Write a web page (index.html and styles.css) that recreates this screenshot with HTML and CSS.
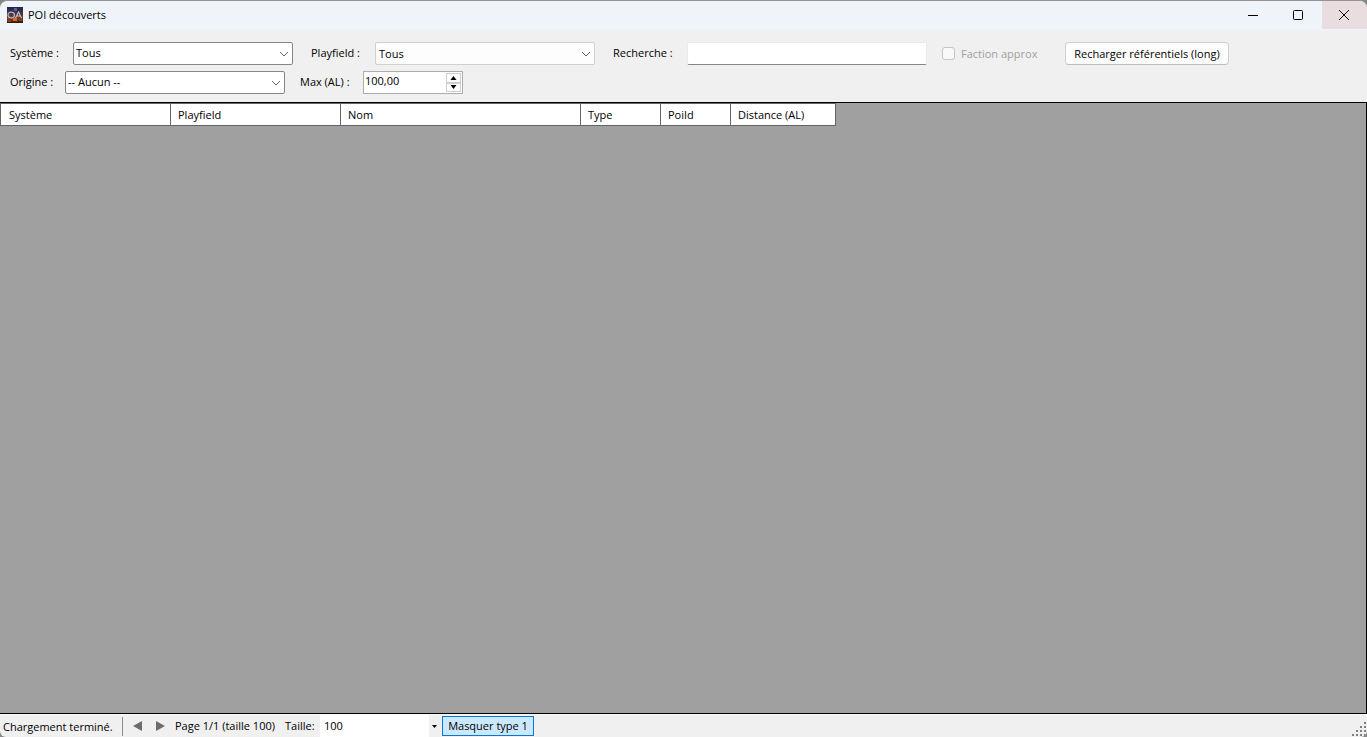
FILE: index.html
```html
<!DOCTYPE html>
<html lang="fr">
<head>
<meta charset="utf-8">
<title>POI découverts</title>
<link rel="stylesheet" href="styles.css">
</head>
<body>
<div class="window">
  <header class="titlebar">
    <svg class="app-icon" width="16" height="16" viewBox="0 0 16 16" aria-hidden="true">
      <defs>
        <linearGradient id="sky" x1="0" y1="0" x2="0" y2="1">
          <stop offset="0" stop-color="#1d2549"/>
          <stop offset=".45" stop-color="#4c3549"/>
          <stop offset=".75" stop-color="#7d3c1b"/>
          <stop offset="1" stop-color="#2c1714"/>
        </linearGradient>
      </defs>
      <rect width="16" height="16" fill="url(#sky)"/>
      <path d="M7 1h3v3H7z" fill="#4b5fae"/>
      <path d="M6 11h4v3H6z" fill="#d0701d"/>
      <path d="M1 13h3v2H1zM12 12h3v2h-3z" fill="#87401a"/>
      <ellipse cx="4.300" cy="8" rx="3.200" ry="2.900" fill="none" stroke="#b9b3bd" stroke-width="1.200"/>
      <path d="M8.500 11l3-6 3 6M9.500 9h4" fill="none" stroke="#c5bfc8" stroke-width="1.200"/>
    </svg>
    <h1 class="title">POI découverts</h1>
    <div class="window-buttons">
      <button class="window-button" type="button" aria-label="Réduire">
        <svg width="12" height="12" viewBox="0 0 12 12"><path d="M1 6.500h10" stroke="#000"/></svg>
      </button>
      <button class="window-button" type="button" aria-label="Agrandir">
        <svg width="12" height="12" viewBox="0 0 12 12"><rect x="1.500" y="1.500" width="9" height="9" rx="1" fill="none" stroke="#000"/></svg>
      </button>
      <button class="window-button close" type="button" aria-label="Fermer">
        <svg width="12" height="12" viewBox="0 0 12 12"><path d="M1 1l10 10M11 1L1 11" stroke="#111"/></svg>
      </button>
    </div>
  </header>

  <form class="filters">
    <div class="filter-row">
      <div class="field">
        <label class="label-system" for="system">Système :</label>
        <span class="combo"><select id="system"><option>Tous</option></select><svg class="chevron" width="10" height="6" viewBox="0 0 10 6"><path d="M1 1l4 4 4-4" fill="none" stroke="#666"/></svg></span>
      </div>
      <div class="field">
        <label class="label-playfield" for="playfield">Playfield :</label>
        <span class="combo flat"><select id="playfield"><option>Tous</option></select><svg class="chevron" width="10" height="6" viewBox="0 0 10 6"><path d="M1 1l4 4 4-4" fill="none" stroke="#666"/></svg></span>
      </div>
      <div class="field">
        <label class="label-search" for="search">Recherche :</label>
        <input class="search" id="search" type="text">
      </div>
      <div class="check">
        <input id="faction" type="checkbox" disabled>
        <label for="faction">Faction approx</label>
      </div>
      <button class="reload" type="button">Recharger référentiels (long)</button>
    </div>
    <div class="filter-row">
      <div class="field">
        <label class="label-origin" for="origin">Origine :</label>
        <span class="combo"><select id="origin"><option>-- Aucun --</option></select><svg class="chevron" width="10" height="6" viewBox="0 0 10 6"><path d="M1 1l4 4 4-4" fill="none" stroke="#666"/></svg></span>
      </div>
      <div class="field second">
        <label class="label-max" for="max">Max (AL) :</label>
        <span class="spinner">
          <input id="max" type="text" value="100,00">
          <span class="steps">
            <button type="button" aria-label="Augmenter"><svg width="7" height="4" viewBox="0 0 7 4"><path d="M0.500 4L3.500 0l3 4z"/></svg></button>
            <button type="button" aria-label="Diminuer"><svg width="7" height="4" viewBox="0 0 7 4"><path d="M0.500 0h6l-3 4z"/></svg></button>
          </span>
        </span>
      </div>
    </div>
  </form>

  <main class="grid-area">
    <table class="poi-table">
      <colgroup>
        <col class="col-place"><col class="col-place"><col class="col-name"><col class="col-type"><col class="col-id"><col class="col-distance">
      </colgroup>
      <thead>
        <tr><th>Système</th><th>Playfield</th><th>Nom</th><th>Type</th><th>PoiId</th><th>Distance (AL)</th></tr>
      </thead>
    </table>
  </main>

  <footer class="statusbar">
    <span class="status">Chargement terminé.</span>
    <button class="page-button" type="button" aria-label="Page précédente"><svg width="9" height="10" viewBox="0 0 9 10"><path d="M9 0v10L0 5z" fill="#6d6d6d"/></svg></button>
    <button class="page-button" type="button" aria-label="Page suivante"><svg width="9" height="10" viewBox="0 0 9 10"><path d="M0 0v10l9-5z" fill="#6d6d6d"/></svg></button>
    <span class="page-info">Page 1/1 (taille 100)</span>
    <label class="size-label" for="size">Taille:</label>
    <span class="size-combo"><select id="size"><option>100</option></select><span class="size-arrow"><svg width="5" height="3" viewBox="0 0 5 3"><path d="M0 0h5L2.500 3z"/></svg></span></span>
    <button class="toggle" type="button" aria-pressed="true">Masquer type 1</button>
    <svg class="grip" width="16" height="16" viewBox="0 0 16 16" aria-hidden="true">
      <path d="M13 1h2v2h-2zM9 5h2v2H9zM13 5h2v2h-2zM5 9h2v2H5zM9 9h2v2H9zM13 9h2v2h-2zM1 13h2v2H1zM5 13h2v2H5zM9 13h2v2H9zM13 13h2v2h-2z" fill="#808080"/>
    </svg>
  </footer>
</div>
</body>
</html>
```

FILE: styles.css
```css
* {
  box-sizing: border-box;
}

body {
  margin: 0;
  background: #888;
  color: #000;
  font: 11px/16px "Open Sans", "Noto Sans", sans-serif;
}

button,
input,
select {
  margin: 0;
  padding: 0;
  border: 0;
  border-radius: 0;
  color: inherit;
  font: inherit;
}

svg {
  display: block;
}

.window {
  display: flex;
  flex-direction: column;
  height: 100vh;
  overflow: hidden;
  border-top: 1px solid #949494;
  border-radius: 8px 8px 6px 6px;
  background: #f0f0f0;
}

.titlebar {
  display: flex;
  align-items: center;
  height: 29px;
  padding: 0 0 1px 7px;
  background: #eef4f9;
}

.title {
  margin: 0 0 0 5px;
  font-size: 11px;
  font-weight: 400;
}

.window-buttons {
  display: flex;
  align-self: stretch;
  margin-left: auto;
}

.window-button {
  display: flex;
  align-items: center;
  justify-content: center;
  width: 45px;
  padding-right: 3px;
  background: transparent;
}

.close {
  padding-right: 2px;
  background: #eadde0;
}

.filters {
  display: flex;
  flex-direction: column;
  gap: 6px;
  padding: 12px 10px 8px;
}

.filter-row {
  display: flex;
  align-items: center;
  gap: 18px;
}

.field {
  display: flex;
  align-items: center;
  white-space: nowrap;
}

.field label {
  padding-bottom: 2px;
}

.second {
  margin-left: -3px;
}

.label-system,
.label-max {
  width: 63px;
}

.label-playfield {
  width: 64px;
}

.label-search {
  width: 74px;
}

.label-origin {
  width: 55px;
}

.combo {
  position: relative;
}

.combo select {
  display: block;
  width: 220px;
  height: 23px;
  padding: 0 20px 1px 2px;
  border: 1px solid #868686;
  border-radius: 2px;
  background: #fff;
  appearance: none;
}

.combo.flat select {
  padding: 0 20px 0 3px;
  border-color: #d0d0d0;
  background: #fdfdfd;
}

.chevron {
  position: absolute;
  top: 9px;
  right: 4px;
  pointer-events: none;
}

.search {
  width: 240px;
  height: 23px;
  padding: 0 4px;
  border: 1px solid #ebebeb;
  border-bottom-color: #868686;
  border-radius: 2px;
  background: #fff;
}

.check {
  display: flex;
  align-items: center;
  gap: 6px;
  width: 120px;
  margin-left: -3px;
  color: #a0a0a0;
  white-space: nowrap;
}

.check input {
  width: 13px;
  height: 13px;
  border: 1px solid #c4c4c4;
  border-radius: 3px;
  background: #f9f9f9;
  appearance: none;
}

.reload {
  width: 164px;
  height: 23px;
  margin-left: -15px;
  border: 1px solid #d0d0d0;
  border-bottom-color: #bcbcbc;
  border-radius: 4px;
  background: #fdfdfd;
  white-space: nowrap;
}

.spinner {
  display: flex;
  width: 100px;
  height: 23px;
  padding: 1px;
  border: 1px solid #abadb3;
  background: #fff;
}

.spinner input {
  flex: 1;
  min-width: 0;
  height: 16px;
  background: transparent;
}

.steps {
  display: flex;
  flex-direction: column;
  width: 15px;
  background: #f0f0f0;
}

.steps button {
  display: flex;
  flex: 1;
  align-items: center;
  justify-content: center;
  min-height: 0;
  border: 1px solid #d0d0d0;
  background: #fdfdfd;
}

.grid-area {
  flex: 1;
  min-height: 0;
  border: 1px solid #000;
  border-left: 0;
  background: #a0a0a0;
}

.poi-table {
  width: 836px;
  border-collapse: collapse;
  table-layout: fixed;
}

.col-place {
  width: 170px;
}

.col-name {
  width: 240px;
}

.col-type {
  width: 80px;
}

.col-id {
  width: 70px;
}

.col-distance {
  width: 105px;
}

.poi-table th {
  height: 22px;
  padding: 0 7px;
  border: 1px solid #646464;
  background: #fff;
  font-weight: 400;
  text-align: left;
}

.poi-table th:first-child {
  padding-left: 8px;
}

.statusbar {
  display: flex;
  align-items: center;
  height: 23px;
  padding-left: 3px;
  border-top: 1px solid #f8f8f8;
  white-space: nowrap;
}

.status {
  width: 120px;
  margin-right: 3px;
  border-right: 1px solid #8c8c8c;
  line-height: 19px;
}

.page-button {
  display: flex;
  align-items: center;
  justify-content: center;
  width: 23px;
  height: 20px;
  background: transparent;
}

.page-info {
  width: 110px;
  margin-left: 3px;
}

.size-label {
  width: 35px;
}

.size-combo {
  position: relative;
}

.size-combo select {
  display: block;
  width: 120px;
  height: 22px;
  padding: 0 14px 0 4px;
  background: #fff;
  appearance: none;
}

.size-arrow {
  position: absolute;
  top: 0;
  right: 0;
  display: flex;
  align-items: center;
  justify-content: center;
  width: 11px;
  height: 22px;
  background: #f0f0f0;
  pointer-events: none;
}

.toggle {
  width: 92px;
  height: 20px;
  margin-left: 2px;
  border: 1px solid #0078d7;
  background: #cce8ff;
}

.grip {
  align-self: flex-end;
  margin-left: auto;
}
```
